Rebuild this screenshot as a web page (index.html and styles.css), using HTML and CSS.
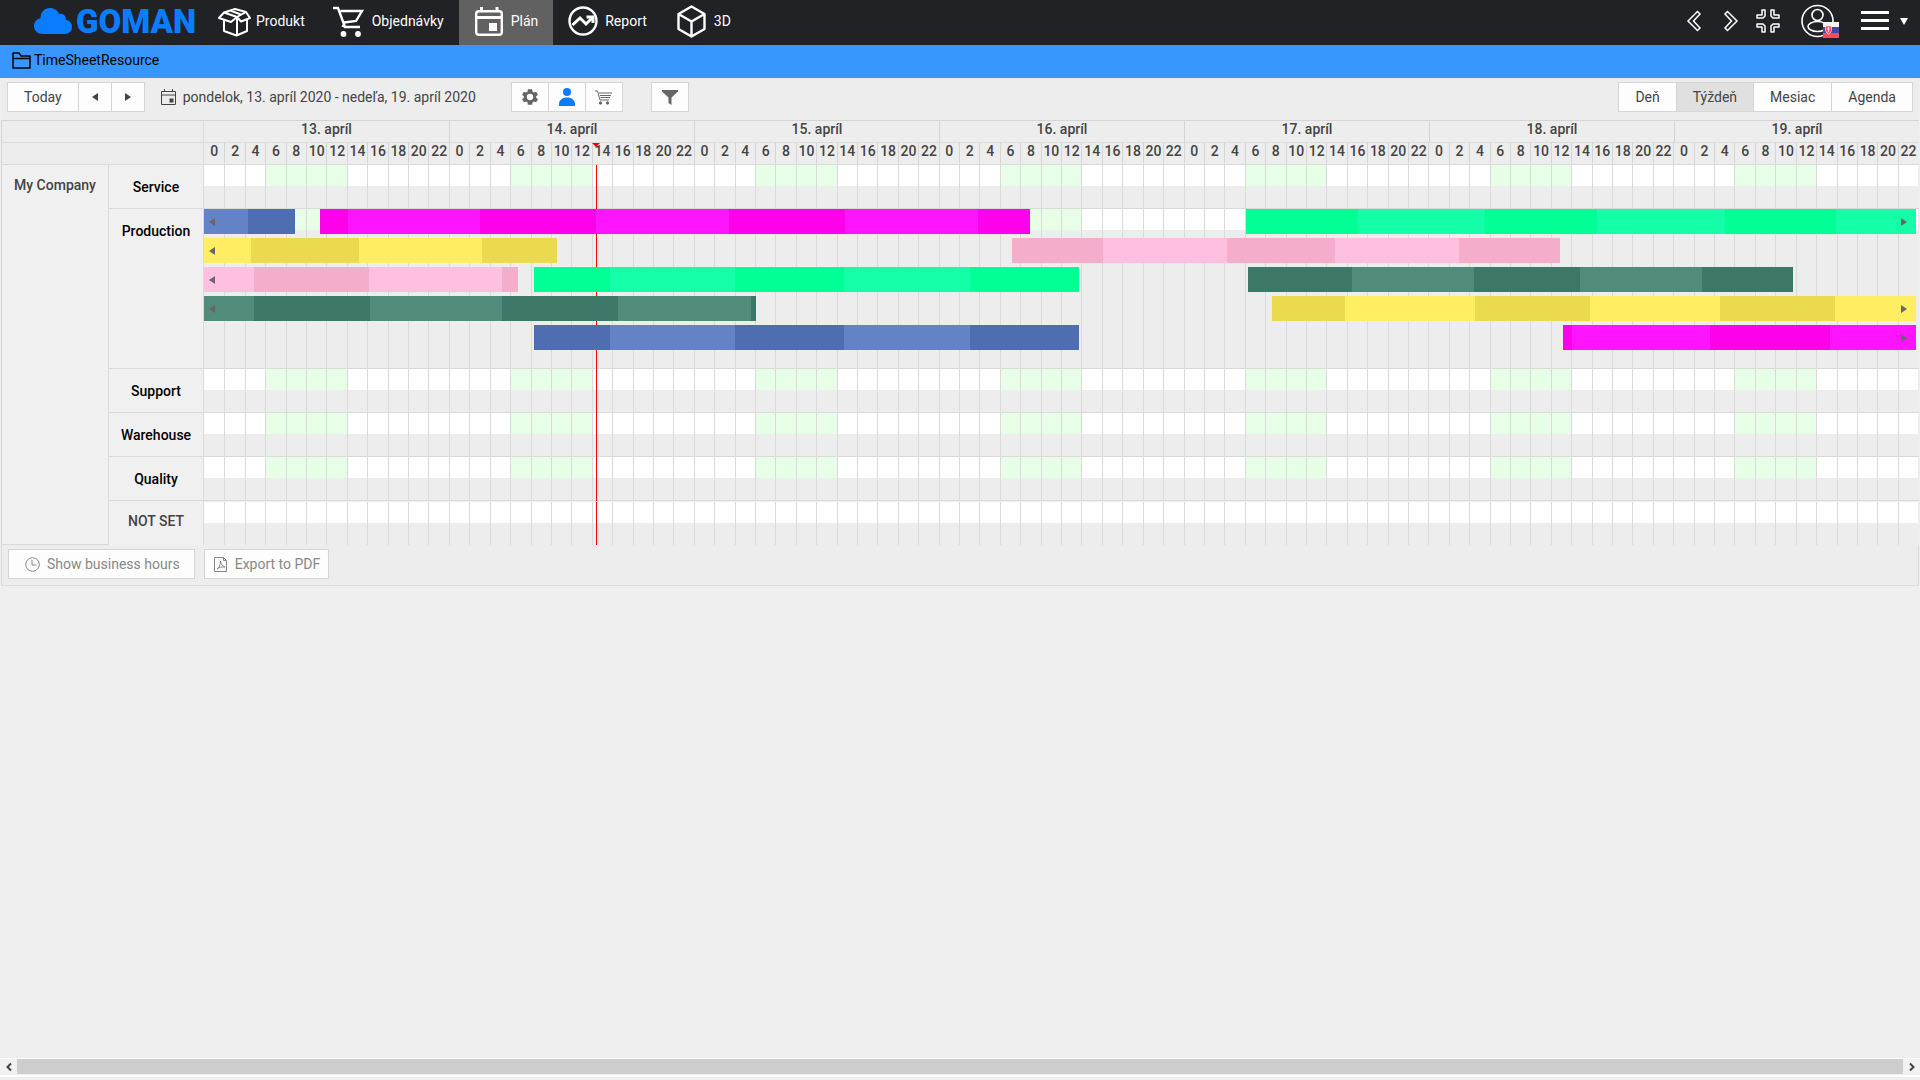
FILE: index.html
```html
<!DOCTYPE html>
<html lang="sk">
<head>
    <meta charset="UTF-8">
    <meta name="viewport" content="width=device-width, initial-scale=1.0">
    <title>GOMAN - Plán</title>
    <link rel="stylesheet" href="styles.css">
</head>
<body>

    <header class="navbar">
        <a class="logo" href="#">
            <svg width="38" height="26" viewBox="0 0 38 26"><path fill="currentColor" d="M9 26C3.500 26 0 22.500 0 18c0-4 2.600-7 6.500-7.700C6.300 4.500 10.500 0 16 0c4.500 0 7.600 2.400 9 6 4-1 7.200 2 6.800 5.800C35.500 12.500 38 15.200 38 18.800 38 23 35 26 30.500 26z"/></svg>
            <span>GOMAN</span>
        </a>
        <nav class="nav">
            <a class="nav-item" href="#">
                <svg width="32" height="32" viewBox="0 0 32 32" fill="none" stroke="currentColor" stroke-width="2" stroke-linejoin="round"><path d="M6 7.500L17 4l11 3-9 5zM6 7.500l-5 5.500 12 4L19 12l4 4.500 9-3.500-4-6M12 5.500l11 4M6 15.500V26l12.500 4.500L29 26V14.500M19 12v18.500"/></svg>
                Produkt
            </a>
            <a class="nav-item" href="#">
                <svg width="32" height="32" viewBox="0 0 32 32" fill="none" stroke="currentColor" stroke-width="2.400"><path d="M-1 3h5l7 19h15M6.500 6H28l-6 10-12 1.500M11 17l-2.500 5"/><circle cx="9.500" cy="29" r="2.900" fill="currentColor" stroke="none"/><circle cx="24" cy="29" r="2.900" fill="currentColor" stroke="none"/></svg>
                Objednávky
            </a>
            <a class="nav-item active" href="#">
                <svg width="32" height="32" viewBox="0 0 32 32" fill="none" stroke="currentColor" stroke-width="2.400"><rect x="3.200" y="6.200" width="25.600" height="23.600" rx="2.500"/><path d="M3 12.500h26M8.500 2v5M24 2v5" stroke-width="3"/><rect x="16" y="18" width="8" height="8" fill="currentColor" stroke="none"/></svg>
                Plán
            </a>
            <a class="nav-item" href="#">
                <svg width="32" height="32" viewBox="0 0 32 32" fill="none" stroke="currentColor" stroke-width="2.400"><circle cx="16" cy="16" r="13.500"/><path d="M5.500 20l7.500-7 6 6 6.500-6.500M19.500 12H26v6" stroke-width="3"/></svg>
                Report
            </a>
            <a class="nav-item" href="#">
                <svg width="32" height="32" viewBox="0 0 32 32" fill="none" stroke="currentColor" stroke-width="2.400" stroke-linejoin="round"><path d="M15.500 1.500L28.500 9v15l-13 7.500L2.500 24V9zM2.500 9l13 7.500 13-7.500M15.500 16.500v15"/></svg>
                3D
            </a>
        </nav>
        <div class="nav-tools">
            <button class="nav-button" aria-label="Späť"><svg width="14" height="22" viewBox="0 0 14 22" fill="none" stroke="currentColor" stroke-width="1.500"><path d="M10.500 1.500L1 11l9.500 9.500 2.500-2.500L6.500 11 13 4z"/></svg></button>
            <button class="nav-button" aria-label="Ďalej"><svg width="14" height="22" viewBox="0 0 14 22" fill="none" stroke="currentColor" stroke-width="1.500"><path d="M3.500 1.500L13 11l-9.500 9.500L1 18 7.500 11 1 4z"/></svg></button>
            <button class="nav-button" aria-label="Zmenšiť"><svg width="24" height="24" viewBox="0 0 24 24" fill="none" stroke="currentColor" stroke-width="1.500" stroke-linejoin="round"><path d="M6 1v5H1v3h6l2-2V1zM18 1v5h5v3h-6l-2-2V1zM6 23v-5H1v-3h6l2 2v6zM18 23v-5h5v-3h-6l-2 2v6z"/></svg></button>
            <button class="nav-button user" aria-label="Používateľ">
                <svg width="34" height="34" viewBox="0 0 34 34" fill="none" stroke="currentColor" stroke-width="1.600"><circle cx="16.500" cy="17" r="15.500"/><circle cx="16.500" cy="11" r="5.500"/><ellipse cx="16.500" cy="22.500" rx="9.500" ry="5"/></svg>
                <svg class="flag" width="16" height="16" viewBox="0 0 16 16"><path fill="#f4f4f4" d="M0 0h16v5H0z"/><path fill="#4248a8" d="M0 5h16v6H0z"/><path fill="#ff4b55" d="M0 11h16v5H0z"/><path fill="#ff4b55" stroke="#f4f4f4" stroke-width=".7" d="M2.500 4h6v4.500q0 2-3 3.500-3-1.500-3-3.500z"/><path stroke="#f4f4f4" stroke-width=".8" d="M5.500 5v5M4 7h3"/></svg>
            </button>
            <button class="nav-button menu" aria-label="Menu">
                <svg width="28" height="20" viewBox="0 0 28 20" fill="currentColor"><path d="M0 0h28v3H0zM0 8h28v3H0zM0 16h28v3H0z"/></svg>
                <svg width="8" height="7" viewBox="0 0 8 7" fill="currentColor"><path d="M0 0h8L4 7z"/></svg>
            </button>
        </div>
    </header>

    <div class="breadcrumb">
        <svg width="19" height="17" viewBox="0 0 19 17" fill="none" stroke="currentColor" stroke-width="1.500" stroke-linejoin="round"><path d="M1 1h6l2 3h9v12H1zM1 6.500h17"/></svg>
        <a href="#">TimeSheetResource</a>
    </div>

    <main class="scheduler">
        <div class="toolbar">
            <div class="button-group">
                <button class="button">Today</button>
                <button class="button arrow" aria-label="Predchádzajúci"><svg width="6" height="8" viewBox="0 0 6 8" fill="currentColor"><path d="M6 0v8L0 4z"/></svg></button>
                <button class="button arrow" aria-label="Nasledujúci"><svg width="6" height="8" viewBox="0 0 6 8" fill="currentColor"><path d="M0 0v8l6-4z"/></svg></button>
            </div>
            <a class="date-range" href="#">
                <svg width="16" height="16" viewBox="0 0 16 16" fill="none" stroke="currentColor"><path d="M.5 2.500h14v13H.5zM.5 6h14M3.500 0v3M11.500 0v3"/><path fill="currentColor" stroke="none" d="M8.500 9.500h4v4h-4z"/></svg>
                pondelok, 13. apríl 2020 - nedeľa, 19. apríl 2020
            </a>
            <div class="button-group">
                <button class="button icon" aria-label="Stroje"><svg width="20" height="20" viewBox="0 0 24 24" fill="currentColor"><path fill-rule="evenodd" d="M19.400 13a7.500 7.500 0 0 0 0-2l2.200-1.700-2.200-3.700-2.600 1a7.500 7.500 0 0 0-1.700-1L14.600 2.800H9.400L9 5.600a7.500 7.500 0 0 0-1.700 1l-2.600-1-2.200 3.700L4.600 11a7.500 7.500 0 0 0 0 2l-2.100 1.700 2.200 3.700 2.600-1a7.500 7.500 0 0 0 1.700 1l.4 2.800h5.200l.5-2.800a7.500 7.500 0 0 0 1.700-1l2.600 1 2.200-3.700zM12 15.800a3.800 3.800 0 1 1 0-7.600 3.800 3.800 0 0 1 0 7.600z"/></svg></button>
                <button class="button icon selected" aria-label="Ľudia"><svg width="16" height="18" viewBox="0 0 16 18" fill="currentColor"><circle cx="8" cy="4" r="4"/><path d="M0 18v-2c0-4 3.500-6.500 8-6.500s8 2.500 8 6.500v2z"/></svg></button>
                <button class="button icon" aria-label="Objednávky"><svg width="17" height="15" viewBox="0 0 17 15" fill="none" stroke="currentColor"><path d="M0 1h2.500l2.500 9h9M4 3h13M5 5.500h11M5.500 7.500h9.500"/><circle cx="5.500" cy="13" r="1.200" fill="currentColor"/><circle cx="12.500" cy="13" r="1.200" fill="currentColor"/></svg></button>
            </div>
            <button class="button icon filter" aria-label="Filter"><svg width="16" height="16" viewBox="0 0 16 16" fill="currentColor"><path d="M0 1h16v1.500L9.500 8.500V16L6.500 14V8.500L0 2.500z"/></svg></button>
            <div class="button-group views">
                <button class="button">Deň</button>
                <button class="button current">Týždeň</button>
                <button class="button">Mesiac</button>
                <button class="button">Agenda</button>
            </div>
        </div>

        <table class="timeline">
            <colgroup>
                <col class="col-company">
                <col class="col-group">
                <col>
            </colgroup>
            <thead>
                <tr>
                    <th class="corner" colspan="2"></th>
                    <th><div class="days" id="days"></div></th>
                </tr>
                <tr>
                    <th class="corner" colspan="2"></th>
                    <th><div class="hours" id="hours"></div></th>
                </tr>
            </thead>
            <tbody id="groups"></tbody>
        </table>

        <div class="actions">
            <button class="button business"><svg width="15" height="15" viewBox="0 0 15 15" fill="none" stroke="currentColor"><circle cx="7.500" cy="7.500" r="6.800"/><path d="M7 3v5h4.500"/></svg>Show business hours</button>
            <button class="button"><svg width="14" height="15" viewBox="0 0 14 15" fill="none" stroke="currentColor"><path d="M.5.500h9l3 3v11H.5zM9.500.500v3h3"/><path d="M3 12c2-1 3.500-4 3.500-8 .5 3.500 2 5 4.500 6-3-.5-6 .5-8 2z"/></svg>Export to PDF</button>
        </div>
    </main>

    <div class="scrollbar">
        <button class="scroll-button" aria-label="Doľava"><svg width="6" height="8" viewBox="0 0 6 8" fill="none" stroke="currentColor" stroke-width="2"><path d="M5 .500L1.500 4 5 7.500"/></svg></button>
        <div class="thumb"></div>
        <button class="scroll-button" aria-label="Doprava"><svg width="6" height="8" viewBox="0 0 6 8" fill="none" stroke="currentColor" stroke-width="2"><path d="M1 .500L4.500 4 1 7.500"/></svg></button>
    </div>

    <script src="script.js"></script>
</body>
</html>
```

FILE: script.js
```js
// One day is 245 units, the whole week 1715
const DAY = 245;
const WEEK = DAY * 7;

// Each bar: colour, start, then the end of every segment.
// Segments alternate between work (dark) and pause (light).
const lanes = [
    [
        { color: 'blue', start: 0, first: 'light', ends: [44, 91], from: true },
        { color: 'magenta', start: 116, first: 'dark', ends: [144, 276, 392, 525, 641, 774, 826] },
        { color: 'green', start: 1042, first: 'dark', ends: [1154, 1281, 1393, 1521, 1632, 1712], to: true }
    ],
    [
        { color: 'yellow', start: 0, first: 'light', ends: [47, 155, 278, 353], from: true },
        { color: 'pink', start: 808, first: 'dark', ends: [899, 1023, 1131, 1255, 1356] }
    ],
    [
        { color: 'pink', start: 0, first: 'light', ends: [50, 165, 298, 314], from: true },
        { color: 'green', start: 330, first: 'dark', ends: [406, 531, 640, 766, 875] },
        { color: 'teal', start: 1044, first: 'dark', ends: [1148, 1270, 1376, 1498, 1589] }
    ],
    [
        { color: 'teal', start: 0, first: 'light', ends: [50, 166, 298, 414, 547, 552], from: true },
        { color: 'yellow', start: 1068, first: 'dark', ends: [1141, 1271, 1386, 1516, 1631, 1712], to: true }
    ],
    [
        { color: 'blue', start: 330, first: 'dark', ends: [406, 531, 640, 766, 875] },
        { color: 'magenta', start: 1359, first: 'dark', ends: [1368, 1506, 1626, 1712], to: true }
    ]
];

const groups = [
    { name: 'Service', business: true },
    { name: 'Production', business: true, lanes: lanes },
    { name: 'Support', business: true },
    { name: 'Warehouse', business: true },
    { name: 'Quality', business: true },
    { name: 'NOT SET', business: false }
];

const arrowLeft = '<svg width="6" height="8" viewBox="0 0 6 8" fill="currentColor"><path d="M6 0v8L0 4z"/></svg>';
const arrowRight = '<svg width="6" height="8" viewBox="0 0 6 8" fill="currentColor"><path d="M0 0v8l6-4z"/></svg>';

function percent(units) {
    return (units / WEEK * 100) + '%';
}

function renderHeader() {
    let days = '';
    let hours = '';
    for (let day = 13; day < 20; day++) {
        days += '<span>' + day + '. apríl</span>';
        for (let hour = 0; hour < 24; hour += 2) {
            hours += '<span>' + hour + '</span>';
        }
    }
    document.getElementById('days').innerHTML = days;
    document.getElementById('hours').innerHTML = hours + '<i class="now-mark"></i>';
}

function renderSlots(business) {
    let html = '';
    for (let i = 0; i < 84; i++) {
        const hour = (i % 12) * 2;
        const open = business && hour >= 6 && hour < 14;
        html += '<div class="slot' + (open ? ' open' : '') + '"></div>';
    }
    return '<div class="slots">' + html + '</div>';
}

function renderLane(bars) {
    let html = '';
    let at = 0;
    bars.forEach(function (bar) {
        html += '<div style="width: ' + percent(bar.start - at) + '"></div>';
        at = bar.start;
        let shade = bar.first;
        bar.ends.forEach(function (end, i) {
            let arrow = '';
            if (bar.from && i === 0) arrow = arrowLeft;
            if (bar.to && i === bar.ends.length - 1) arrow = arrowRight;
            html += '<div class="segment ' + bar.color + ' ' + shade + (bar.to ? ' to' : '') +
                '" style="width: ' + percent(end - at) + '">' + arrow + '</div>';
            at = end;
            shade = shade === 'dark' ? 'light' : 'dark';
        });
    });
    return '<div class="lane">' + html + '</div>';
}

function renderGroups() {
    document.getElementById('groups').innerHTML = groups.map(function (group, i) {
        const company = i === 0 ? '<th class="company" rowspan="6" scope="rowgroup">My Company</th>' : '';
        const bars = group.lanes ? '<div class="lanes">' + group.lanes.map(renderLane).join('') + '</div>' : '';
        return '<tr>' + company +
            '<th class="group' + (group.business ? '' : ' unset') + '" scope="row">' + group.name + '</th>' +
            '<td><div class="track">' + renderSlots(group.business) + '<i class="now"></i>' + bars + '</div></td></tr>';
    }).join('');
}

renderHeader();
renderGroups();
```

FILE: styles.css
```css
* {
    box-sizing: border-box;
}

body {
    margin: 0;
    min-height: 100vh;
    display: flex;
    flex-direction: column;
    background-color: #efefef;
    color: #444;
    font-family: Roboto, "Liberation Sans", sans-serif;
    font-size: 14px;
}

a {
    color: inherit;
    text-decoration: none;
}

button {
    font: inherit;
    color: inherit;
    cursor: pointer;
}

svg {
    display: block;
    flex: none;
    overflow: visible;
}

/* Top navigation */
.navbar {
    display: flex;
    height: 45px;
    background-color: #212226;
    color: #fff;
}

.logo {
    display: flex;
    align-items: center;
    gap: 4px;
    width: 204px;
    padding-left: 34px;
    padding-bottom: 3px;
    color: #0a7dff;
    font-size: 33px;
    font-weight: 900;
}

.nav {
    display: flex;
}

.nav-item {
    display: flex;
    align-items: center;
    gap: 6px;
    padding: 0 15px 4px 14px;
}

.nav-item.active {
    background-color: #616161;
}

.nav-tools {
    display: flex;
    align-items: center;
    gap: 13px;
    margin-left: auto;
    padding: 0 12px 3px 0;
}

.nav-button {
    display: flex;
    align-items: center;
    justify-content: center;
    min-width: 24px;
    padding: 0;
    border: none;
    background: none;
}

.user {
    position: relative;
    margin-left: 8px;
}

.flag {
    position: absolute;
    top: 18px;
    left: 22px;
}

.menu {
    gap: 11px;
    padding-left: 13px;
}

.breadcrumb {
    display: flex;
    align-items: center;
    gap: 3px;
    height: 33px;
    padding: 0 12px 3px;
    background-color: #3797ff;
    color: #000;
}

/* Toolbar */
.scheduler {
    margin: 0 1px;
    background-color: #ededed;
}

.toolbar {
    display: flex;
    align-items: center;
    height: 42px;
    padding: 0 6px 4px;
}

.button-group {
    display: flex;
}

.button {
    display: flex;
    align-items: center;
    justify-content: center;
    height: 30px;
    padding: 0 16px;
    border: 1px solid #d5d5d5;
    background-color: #fdfdfd;
}

.button-group .button + .button {
    margin-left: -1px;
}

.button.arrow {
    width: 34px;
    padding: 0;
}

.date-range {
    display: flex;
    align-items: center;
    gap: 6px;
    margin: 0 35px 0 16px;
}

.button.icon {
    width: 38px;
    padding: 0;
    color: #666;
}

.button.selected {
    color: #0a7dff;
}

.filter {
    margin-left: 28px;
}

.views {
    margin-left: auto;
}

.views .button.current {
    background-color: #e0e0e0;
}

/* Timeline */
.timeline {
    width: 100%;
    table-layout: fixed;
    border-spacing: 0;
    border-top: 1px solid #d5d5d5;
    border-left: 1px solid #d5d5d5;
}

.timeline th,
.timeline td {
    padding: 0;
    border-bottom: 1px solid #dadada;
    font-weight: 500;
}

.col-company {
    width: 107px;
}

.col-group {
    width: 95px;
}

.timeline thead th {
    height: 22px;
}

.timeline .corner,
.timeline .company,
.timeline .group {
    border-right: 1px solid #dadada;
}

.days,
.hours,
.slots {
    display: flex;
}

.days span,
.hours span {
    flex: none;
    height: 21px;
    border-left: 1px solid #d5d5d5;
    line-height: 17px;
    text-align: center;
}

.days span {
    width: calc(100% / 7);
}

.hours span,
.slot {
    width: calc(100% / 84);
}

.hours {
    position: relative;
}

.hours span {
    display: flex;
    justify-content: center;
}

.days span:first-child,
.hours span:first-child,
.slot:first-child {
    border-left: none;
}

.now-mark {
    position: absolute;
    top: 0;
    left: 22.86%;
    border: 4px solid transparent;
    border-top-color: #f00;
    border-bottom: none;
    transform: translateX(-50%);
}

.timeline .company {
    padding-top: 12px;
    background-color: #f0f0f0;
    vertical-align: top;
}

.timeline .group {
    height: 44px;
    padding-top: 14px;
    background-color: #f0f0f0;
    color: #000;
    line-height: 16px;
    vertical-align: top;
}

.timeline .unset {
    padding-top: 12px;
    border-bottom: none;
    color: #444;
}

.timeline tr:last-child td {
    border-bottom: none;
}

.track {
    display: grid;
    position: relative;
    min-height: 43px;
}

.slots,
.lanes {
    grid-area: 1 / 1;
}

.slot {
    flex: none;
    border-left: 1px solid #dadada;
    background: linear-gradient(#fff, #fff) no-repeat 0 0 / 100% 21px;
}

.slot.open {
    background-image: linear-gradient(#e6ffe6, #e6ffe6);
}

.now {
    position: absolute;
    top: 0;
    bottom: -1px;
    left: 22.86%;
    width: 1px;
    background-color: #f00;
}

tr:last-child .now {
    bottom: 0;
}

.lanes {
    display: flex;
    flex-direction: column;
    gap: 4px;
    padding-bottom: 18px;
    position: relative;
}

.lane {
    display: flex;
    height: 25px;
}

.segment {
    display: flex;
    align-items: center;
    padding-left: 5px;
    color: #666;
    overflow: hidden;
}

.segment.to {
    justify-content: flex-end;
    padding: 0 9px 0 0;
}

.blue.light { background-color: #6482c6; }
.blue.dark { background-color: #4e6eb1; }
.magenta.light { background-color: #ff14ff; }
.magenta.dark { background-color: #ff00eb; }
.green.light { background-color: #14ffa8; }
.green.dark { background-color: #00ff94; }
.yellow.light { background-color: #ffee62; }
.yellow.dark { background-color: #ebda4e; }
.pink.light { background-color: #ffc0df; }
.pink.dark { background-color: #f4adcb; }
.teal.light { background-color: #518b7b; }
.teal.dark { background-color: #3d7767; }

/* Buttons under the timeline */
.actions {
    display: flex;
    gap: 9px;
    height: 41px;
    padding: 4px 6px;
    border: 1px solid #dadada;
    border-top: none;
}

.actions .button {
    gap: 7px;
    padding: 0 8px 0 9px;
    color: #888;
}

.actions .business {
    padding: 0 14px 0 16px;
}

/* Horizontal scrollbar */
.scrollbar {
    display: flex;
    height: 19px;
    margin-top: auto;
    margin-bottom: 3px;
    border-top: 1px solid #fff;
    border-bottom: 2px solid #fff;
}

.scroll-button {
    display: flex;
    align-items: center;
    justify-content: center;
    width: 17px;
    padding: 0;
    border: none;
    background-color: #f1f1f1;
}

.thumb {
    flex: 1;
    margin-bottom: 1px;
    background-color: #cdcdcd;
}
```
